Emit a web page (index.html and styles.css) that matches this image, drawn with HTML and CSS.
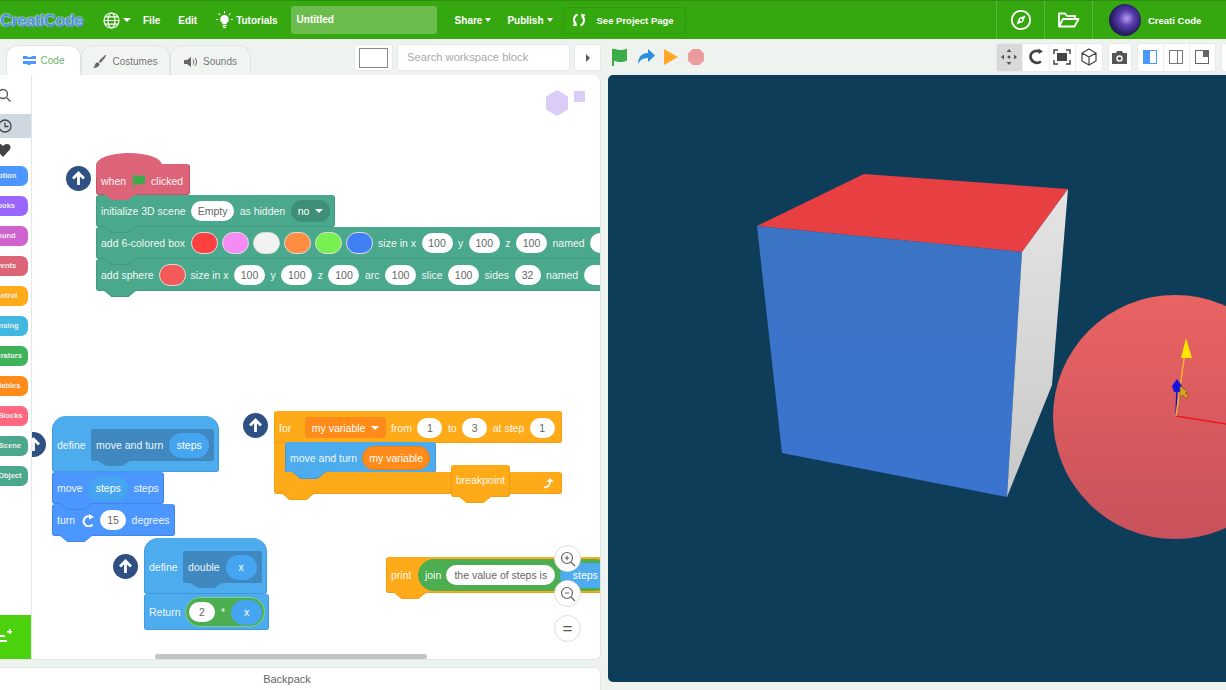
FILE: index.html
```html
<!DOCTYPE html>
<html lang="en">

<head>
    <meta charset="UTF-8">
    <title>CreatiCode</title>
    <link rel="stylesheet" href="styles.css">
</head>

<body>
    <header class="topbar">
        <div class="logo">CreatiCode</div>
        <svg class="globe" width="17" height="17" viewBox="0 0 17 17" fill="none" stroke="#fff" stroke-width="1.2">
            <circle cx="8.5" cy="8.5" r="7.5" />
            <ellipse cx="8.5" cy="8.5" rx="3.4" ry="7.5" />
            <path d="M1 8.5h15M2 4.8h13M2 12.2h13" />
        </svg>
        <span class="caret caret-globe"></span>
        <span class="menu-item menu-file">File</span>
        <span class="menu-item menu-edit">Edit</span>
        <svg class="bulb" width="17" height="18" viewBox="0 0 17 18" fill="#fff">
            <path d="M8.5 4a4.3 4.3 0 0 0-2.6 7.7c.5.4.7 1 .7 1.6h3.8c0-.6.2-1.2.7-1.6A4.3 4.3 0 0 0 8.5 4z" />
            <rect x="6.6" y="14" width="3.8" height="1.4" />
            <rect x="7.2" y="16" width="2.6" height="1.2" />
            <path d="M8 0h1v2.4H8zM0 8h2.2v1H0zM14.8 8H17v1h-2.2zM2.2 2.8l.7-.7 1.6 1.6-.7.7zM14.1 2.1l.7.7-1.6 1.6-.7-.7z" />
        </svg>
        <span class="menu-item menu-tutorials">Tutorials</span>
        <div class="title-box">Untitled</div>
        <span class="menu-item menu-share">Share</span>
        <span class="caret caret-small"></span>
        <span class="menu-item menu-publish">Publish</span>
        <span class="caret caret-small"></span>
        <div class="project-btn">
            <svg width="14" height="14" viewBox="0 0 14 14" fill="none" stroke="#fff" stroke-width="2">
                <path d="M5.5 1.5C3 2.5 2 4.5 2 7s.8 3.7 2 5M8.5 12.5C11 11.5 12 9.5 12 7s-.8-3.7-2-5" />
                <path d="M3.5 8.5 4 12.5l-3-.5M10.5 5.5 10 1.5l3 .5" stroke-width="1.3" />
            </svg>
            <span>See Project Page</span>
        </div>
        <div class="topbar-right">
            <div class="top-icon">
                <svg width="22" height="22" viewBox="0 0 22 22" fill="none" stroke="#fff" stroke-width="1.8">
                    <circle cx="11" cy="11" r="9.2" />
                    <path d="M15.5 6.5 13 13l-6.5 2.5L9 9z" fill="#fff" stroke="none" />
                    <circle cx="11" cy="11" r="1.3" fill="#36a80f" stroke="none" />
                </svg>
            </div>
            <div class="top-icon">
                <svg width="23" height="18" viewBox="0 0 23 18" fill="none" stroke="#fff" stroke-width="1.8" stroke-linejoin="round">
                    <path d="M2 15.5V2.5h6l2 2.5h8v3" />
                    <path d="M2 15.5h15.5L21.5 8H6z" />
                </svg>
            </div>
            <div class="user">
                <div class="avatar"></div>
                <span>Creati Code</span>
            </div>
        </div>
    </header>

    <div class="subbar">
        <div class="subbar-left">
            <div class="tabs">
                <div class="tab tab-active">
                    <svg width="13" height="11" viewBox="0 0 13 11" fill="#4c97ff">
                        <path d="M0 1h4l1 1h3l1-1h4v3H0zM0 6h13v3H8l-1 1H5L4 9H0z" />
                    </svg>
                    <span>Code</span>
                </div>
                <div class="tab">
                    <svg width="14" height="14" viewBox="0 0 14 14" fill="#666">
                        <path d="M13 0c.6.6-3 5.5-5.5 8L5.8 6.3C8 3.8 12.4-.6 13 0zM5 7.2l1.7 1.7C6.5 11.5 3 13 0 12.800c1.5-.8 1.6-2 2-3.200.4-1.200 1.600-2.400 3-2.400z" />
                    </svg>
                    <span>Costumes</span>
                </div>
                <div class="tab">
                    <svg width="14" height="12" viewBox="0 0 14 12" fill="#666">
                        <path d="M0 4h3l4-3v10L3 8H0z" />
                        <path d="M9 3.5c1.2 1.5 1.2 3.5 0 5M11 2c2 2.3 2 5.7 0 8" fill="none" stroke="#666" />
                    </svg>
                    <span>Sounds</span>
                </div>
            </div>
            <div class="tool-box color-box"><div class="color-inner"></div></div>
            <div class="tool-box search-box">Search workspace block</div>
            <div class="tool-box arrow-box"><span class="arrow-right"></span></div>
        </div>
        <div class="subbar-right">
            <div class="run-icons">
                <svg width="18" height="18" viewBox="0 0 18 18" fill="#3cab4a">
                    <path d="M1 1c3-1 5 1 8 1 2 0 5-.5 7-1.5v12c-2 1-5 1.500-7 1.500-3 0-5-1.500-6-1v5.500H1z" />
                </svg>
                <svg width="18" height="16" viewBox="0 0 18 16" fill="#2b8fe0">
                    <path d="M11 0l7 6.5-7 6.5V9C6 9 3 11 1 15 1 9 4 4 11 4z" />
                </svg>
                <svg width="16" height="18" viewBox="0 0 16 18" fill="#ffa726">
                    <path d="M1 1v16l14-8z" />
                </svg>
                <svg width="18" height="18" viewBox="0 0 18 18" fill="#eb9c9c">
                    <path d="M5.5 1h7L17 5.5v7L12.5 17h-7L1 12.5v-7z" />
                </svg>
            </div>
            <div class="stage-tools">
                <div class="tool-group">
                    <div class="tool tool-on">
                        <svg width="16" height="16" viewBox="0 0 16 16" fill="#555">
                            <path d="M8 0l2.5 3h-5zM8 16l-2.5-3h5zM0 8l3-2.5v5zM16 8l-3 2.5v-5z" />
                            <circle cx="8" cy="8" r="1.5" />
                        </svg>
                    </div>
                    <div class="tool">
                        <svg width="16" height="18" viewBox="0 0 16 18" fill="none" stroke="#444" stroke-width="2.6">
                            <path d="M13 13.5C9 16.5 3 14 2.5 9 2 4.5 7 1.5 12 3.500" />
                            <path d="M10.5 .5l4.5 3-4.5 2.5z" fill="#444" stroke="none" />
                        </svg>
                    </div>
                    <div class="tool">
                        <svg width="18" height="16" viewBox="0 0 18 16" fill="none" stroke="#444" stroke-width="1.5">
                            <path d="M1 5V1h4M13 1h4v4M17 11v4h-4M5 15H1v-4" />
                            <rect x="4" y="4" width="10" height="8" fill="#444" stroke="none" />
                        </svg>
                    </div>
                    <div class="tool">
                        <svg width="16" height="18" viewBox="0 0 16 18" fill="none" stroke="#444" stroke-width="1.2">
                            <path d="M8 1l7 4v8l-7 4-7-4V5zM1 5l7 4 7-4M8 9v8" />
                        </svg>
                    </div>
                </div>
                <div class="tool-group">
                    <div class="tool tool-narrow">
                        <svg width="17" height="15" viewBox="0 0 17 15" fill="#555">
                            <path d="M1 3h4l1-2h5l1 2h4v11H1z" />
                            <circle cx="8.5" cy="8.5" r="3.2" fill="#fff" />
                            <circle cx="8.5" cy="8.5" r="1.8" />
                        </svg>
                    </div>
                </div>
                <div class="tool-group">
                    <div class="tool tool-panel">
                        <svg width="14" height="14" viewBox="0 0 14 14">
                            <rect x=".5" y=".5" width="13" height="13" fill="#fff" stroke="#4c97ff" />
                            <rect x="1" y="1" width="6" height="12" fill="#4c97ff" />
                        </svg>
                    </div>
                    <div class="tool tool-panel">
                        <svg width="14" height="14" viewBox="0 0 14 14">
                            <rect x=".5" y=".5" width="13" height="13" fill="#fff" stroke="#777" />
                            <rect x="8" y="1" width="1" height="12" fill="#777" />
                        </svg>
                    </div>
                    <div class="tool tool-panel">
                        <svg width="14" height="14" viewBox="0 0 14 14">
                            <rect x=".5" y=".5" width="13" height="13" fill="#fff" stroke="#666" />
                            <rect x="8" y="1" width="5" height="6" fill="#666" />
                        </svg>
                    </div>
                </div>
                <div class="tool-group"><div class="tool"></div></div>
            </div>
        </div>
    </div>

    <main class="main">
        <section class="editor">
            <div class="workspace">
                <nav class="palette">
                    <div class="palette-icon">
                        <svg width="14" height="14" viewBox="0 0 14 14" fill="none" stroke="#555" stroke-width="1.3">
                            <circle cx="3" cy="6" r="4.5" />
                            <path d="M6.5 9.5 10.5 13.5" />
                        </svg>
                    </div>
                    <div class="palette-icon palette-recent">
                        <svg width="14" height="14" viewBox="0 0 14 14" fill="none" stroke="#444" stroke-width="1.3">
                            <circle cx="5" cy="7" r="6" />
                            <path d="M5 3.5V7.5h3.5" />
                        </svg>
                    </div>
                    <div class="palette-icon palette-heart">
                        <svg width="16" height="14" viewBox="0 0 16 14" fill="#444">
                            <path d="M8 14 1.5 7C-.5 4.8.5 1 4 1c2 0 3.3 1 4 2.2C8.7 2 10 1 12 1c3.5 0 4.5 3.8 2.5 6z" />
                        </svg>
                    </div>
                    <div class="cat cat-motion">Motion</div>
                    <div class="cat cat-looks">Looks</div>
                    <div class="cat cat-sound">Sound</div>
                    <div class="cat cat-events">Events</div>
                    <div class="cat cat-control">Control</div>
                    <div class="cat cat-sensing">Sensing</div>
                    <div class="cat cat-operators">Operators</div>
                    <div class="cat cat-variables">Variables</div>
                    <div class="cat cat-myblocks">My Blocks</div>
                    <div class="cat cat-scene">3D Scene</div>
                    <div class="cat cat-object">3D Object</div>
                    <div class="add-ext">
                        <svg width="16" height="16" viewBox="0 0 16 16" fill="#fff">
                            <path d="M0 6h9v2H0zM0 11h11v2H0zM11 2h2V0h1.5v2H16v1.5h-1.5V5H13V3.5h-2z" />
                        </svg>
                    </div>
                </nav>

                <div class="canvas">
                    <div class="hint-shapes">
                        <svg width="42" height="28" viewBox="0 0 42 28" fill="#dccdf8">
                            <path d="M11 0l11 6.5v13L11 26 0 19.5v-13z" />
                            <rect x="28" y="1" width="11" height="11" />
                        </svg>
                    </div>

                    <div class="up-btn up-1"><svg width="15" height="15" viewBox="0 0 15 15" fill="none" stroke="#fff" stroke-width="2.8"><path d="M7.5 14V2M2 7.5 7.5 2 13 7.5" /></svg></div>
                    <div class="stack stack-scene">
                        <div class="row hat red notch">
                            <span>when</span>
                            <svg width="14" height="14" viewBox="0 0 14 14" fill="#3cab4a"><path d="M1 1c2.5-1 4 1 6 1s4-1 6-1v8.5c-2 1-4 1-6 1s-3.5-1-4.5-.6V14H1z" /></svg>
                            <span>clicked</span>
                        </div>
                        <div class="row green fit notch">
                            <span>initialize 3D scene</span>
                            <b class="input">Empty</b>
                            <span>as hidden</span>
                            <b class="drop drop-green">no <i class="caret"></i></b>
                        </div>
                        <div class="row green notch">
                            <span>add 6-colored box</span>
                            <b class="swatch sw-red"></b>
                            <b class="swatch sw-pink"></b>
                            <b class="swatch sw-white"></b>
                            <b class="swatch sw-orange"></b>
                            <b class="swatch sw-lime"></b>
                            <b class="swatch sw-blue"></b>
                            <span>size in x</span>
                            <b class="input num">100</b>
                            <span>y</span>
                            <b class="input num">100</b>
                            <span>z</span>
                            <b class="input num">100</b>
                            <span>named</span>
                            <b class="input wide"></b>
                        </div>
                        <div class="row green notch">
                            <span>add sphere</span>
                            <b class="swatch sw-coral"></b>
                            <span>size in x</span>
                            <b class="input num">100</b>
                            <span>y</span>
                            <b class="input num">100</b>
                            <span>z</span>
                            <b class="input num">100</b>
                            <span>arc</span>
                            <b class="input num">100</b>
                            <span>slice</span>
                            <b class="input num">100</b>
                            <span>sides</span>
                            <b class="input short">32</b>
                            <span>named</span>
                            <b class="input wide"></b>
                        </div>
                    </div>

                    <div class="up-btn up-2"><svg width="15" height="15" viewBox="0 0 15 15" fill="none" stroke="#fff" stroke-width="2.8"><path d="M7.5 14V2M2 7.5 7.5 2 13 7.5" /></svg></div>
                    <div class="stack stack-move">
                        <div class="row sky define">
                            <span>define</span>
                            <div class="proto">
                                <span>move and turn</span>
                                <b class="pill pill-steps">steps</b>
                            </div>
                        </div>
                        <div class="row blue fit notch">
                            <span>move</span>
                            <b class="pill pill-steps">steps</b>
                            <span>steps</span>
                        </div>
                        <div class="row blue fit notch">
                            <span>turn</span>
                            <svg width="14" height="13" viewBox="0 0 14 13" fill="none" stroke="#fff" stroke-width="2">
                                <path d="M11.5 10.5A5 5 0 1 1 9 2.5" />
                                <path d="M8 0l5 3-5 2.5z" fill="#fff" stroke="none" />
                            </svg>
                            <b class="input short">15</b>
                            <span>degrees</span>
                        </div>
                    </div>

                    <div class="up-btn up-3"><svg width="15" height="15" viewBox="0 0 15 15" fill="none" stroke="#fff" stroke-width="2.8"><path d="M7.5 14V2M2 7.5 7.5 2 13 7.5" /></svg></div>
                    <div class="stack stack-double">
                        <div class="row sky define define-small">
                            <span>define</span>
                            <div class="proto">
                                <span>double</span>
                                <b class="pill pill-x">x</b>
                            </div>
                        </div>
                        <div class="row sky fit return">
                            <span>Return</span>
                            <div class="op-pill">
                                <b class="input short">2</b>
                                <span>*</span>
                                <b class="pill pill-x">x</b>
                            </div>
                        </div>
                    </div>

                    <div class="up-btn up-4"><svg width="15" height="15" viewBox="0 0 15 15" fill="none" stroke="#fff" stroke-width="2.8"><path d="M7.5 14V2M2 7.5 7.5 2 13 7.5" /></svg></div>
                    <div class="stack stack-for">
                        <div class="row amber for-head">
                            <span>for</span>
                            <b class="drop drop-amber">my variable <i class="caret"></i></b>
                            <span>from</span>
                            <b class="input one">1</b>
                            <span>to</span>
                            <b class="input one">3</b>
                            <span>at step</span>
                            <b class="input one">1</b>
                        </div>
                        <div class="for-mid">
                            <div class="row sky fit notch for-call">
                                <span>move and turn</span>
                                <b class="pill pill-var">my variable</b>
                            </div>
                        </div>
                        <div class="row amber for-foot notch">
                            <svg class="loop-arrow" width="12" height="12" viewBox="0 0 12 12" fill="none" stroke="#fff" stroke-width="1.6">
                                <path d="M1 10.5c4 0 6-2 6-6" />
                                <path d="M3.8 5 7 1l3.5 4z" fill="#fff" stroke="none" />
                            </svg>
                        </div>
                        <div class="row amber breakpoint notch">
                            <span>breakpoint</span>
                        </div>
                    </div>

                    <div class="stack stack-print">
                        <div class="row amber print notch">
                            <span>print</span>
                            <div class="join-pill">
                                <span>join</span>
                                <b class="input text-input">the value of steps is</b>
                                <b class="pill pill-join">steps</b>
                            </div>
                        </div>
                    </div>

                    <div class="zoom-btns">
                        <div class="zoom-btn">
                            <svg width="16" height="16" viewBox="0 0 16 16" fill="none" stroke="#666" stroke-width="1.2">
                                <circle cx="7" cy="7" r="5.5" />
                                <path d="M11 11l4 4M4.8 7h4.4M7 4.8v4.4" />
                            </svg>
                        </div>
                        <div class="zoom-btn">
                            <svg width="16" height="16" viewBox="0 0 16 16" fill="none" stroke="#666" stroke-width="1.2">
                                <circle cx="7" cy="7" r="5.5" />
                                <path d="M11 11l4 4M4.8 7h4.4" />
                            </svg>
                        </div>
                        <div class="zoom-btn zoom-reset">=</div>
                    </div>

                    <div class="scrollbar"></div>
                </div>
            </div>
            <div class="backpack">Backpack</div>
        </section>

        <section class="stage">
            <svg class="scene" width="618" height="607" viewBox="608 75 618 607">
                <defs>
                    <linearGradient id="sphereFill" x1="0" y1="0" x2="0" y2="1">
                        <stop offset="0" stop-color="#e96362" />
                        <stop offset="1" stop-color="#c8525c" />
                    </linearGradient>
                    <linearGradient id="blueFace" x1="0" y1="0" x2="0" y2="1">
                        <stop offset="0" stop-color="#3b74c4" />
                        <stop offset="1" stop-color="#3a74d0" />
                    </linearGradient>
                    <linearGradient id="greyFace" x1="0" y1="0" x2="0" y2="1">
                        <stop offset="0" stop-color="#e4e4e4" />
                        <stop offset="1" stop-color="#c8c8c8" />
                    </linearGradient>
                </defs>
                <polygon points="757,226 864,174 1068,189 1022,252" fill="#e83f42" />
                <polygon points="757,226 1022,252 1007,497 782,453" fill="url(#blueFace)" />
                <polygon points="1068,189 1022,252 1007,497 1052,385" fill="url(#greyFace)" />
                <circle cx="1175" cy="417" r="122" fill="url(#sphereFill)" />
                <path d="M1176 416 1226 424" stroke="#f01818" stroke-width="1.5" />
                <path d="M1176 416 1177 388" stroke="#1010d0" stroke-width="1.5" />
                <path d="M1176 416 1185 352" stroke="#f5b030" stroke-width="1.5" />
                <path d="M1186 338 1192 358 1181 358z" fill="#ffe600" />
                <path d="M1177 379 1182 386 1180 392 1174 392 1172 386z" fill="#1414e0" />
                <path d="M1180 386 1180 398 1183 395 1187 399 1188 396 1185 393 1188 392z" fill="#d9a326" stroke="#6b5312" stroke-width=".6" />
            </svg>
        </section>
    </main>
</body>

</html>
```

FILE: styles.css
```css
body {
    margin: 0;
    width: 1226px;
    height: 690px;
    overflow: hidden;
    font-family: "Liberation Sans", Arial, sans-serif;
    background-color: #eef3ef;
}

svg {
    display: block;
    flex-shrink: 0;
}

/* Top bar */
.topbar {
    display: flex;
    align-items: center;
    height: 39px;
    background-color: #36a80f;
    border-top: 1px solid #2f8f10;
    box-sizing: border-box;
    color: #fff;
    font-size: 10px;
    font-weight: bold;
}

.logo {
    width: 87px;
    flex-shrink: 0;
    font-size: 16.5px;
    letter-spacing: -0.5px;
    color: #4d94d8;
    text-shadow: 0 0 1px #fff, 0 0 2px #d8f0ff, 1px 1px 0 #1f5f9a;
    white-space: nowrap;
}

.globe {
    margin-left: 16px;
}

.caret {
    display: inline-block;
    width: 0;
    height: 0;
    border-left: 4px solid transparent;
    border-right: 4px solid transparent;
    border-top: 4px solid currentColor;
    vertical-align: middle;
}

.caret-globe {
    margin-left: 3px;
}

.caret-small {
    margin-left: 3px;
    border-left-width: 3px;
    border-right-width: 3px;
}

.menu-file {
    margin-left: 12px;
}

.menu-edit {
    margin-left: 18px;
}

.bulb {
    margin-left: 19px;
}

.menu-tutorials {
    margin-left: 3px;
}

.title-box {
    width: 146px;
    height: 28px;
    line-height: 28px;
    margin-left: 13px;
    padding-left: 6px;
    box-sizing: border-box;
    background-color: #6dbd4e;
    border-radius: 3px;
}

.menu-share {
    margin-left: 18px;
}

.menu-publish {
    margin-left: 16px;
}

.project-btn {
    display: flex;
    align-items: center;
    gap: 11px;
    width: 123px;
    height: 27px;
    margin-left: 10px;
    padding-left: 8px;
    box-sizing: border-box;
    border: 1px solid #32980f;
    border-radius: 4px;
    font-size: 9.5px;
}

.topbar-right {
    display: flex;
    align-items: center;
    height: 100%;
    margin-left: auto;
}

.top-icon {
    display: flex;
    align-items: center;
    justify-content: center;
    width: 47px;
    height: 100%;
    border-left: 1px solid #58b83b;
}

.user {
    display: flex;
    align-items: center;
    gap: 7px;
    width: 134px;
    height: 100%;
    padding-left: 16px;
    box-sizing: border-box;
    border-left: 1px solid #58b83b;
    font-size: 9.5px;
}

.avatar {
    width: 32px;
    height: 32px;
    border-radius: 50%;
    background: radial-gradient(circle at 55% 45%, #b9a0f0 0%, #5a3fb0 30%, #2a2068 60%, #120f30 100%);
}

/* Second bar */
.subbar {
    display: flex;
    height: 36px;
}

.subbar-left {
    display: flex;
    align-items: flex-end;
    width: 601px;
    flex-shrink: 0;
}

.tabs {
    display: flex;
    margin-left: 6px;
    height: 30px;
}

.tab {
    display: flex;
    align-items: center;
    justify-content: center;
    gap: 5px;
    width: 81px;
    padding-top: 2px;
    box-sizing: border-box;
    background-color: #f1f5f2;
    border: 1px solid #dfe5e0;
    border-bottom: none;
    border-radius: 12px 12px 0 0;
    font-size: 10px;
    color: #777;
}

.tab:nth-child(2) {
    width: 89px;
}

.tab-active {
    width: 75px;
    padding-top: 0;
    background-color: #fff;
    color: #6fb06a;
}

.tool-box {
    height: 27px;
    margin-bottom: 4px;
    box-sizing: border-box;
    background-color: #fff;
    border: 1px solid #e6eae6;
    border-radius: 3px;
}

.color-box {
    display: flex;
    align-items: center;
    justify-content: center;
    width: 39px;
    margin-left: 103px;
}

.color-inner {
    width: 27px;
    height: 18px;
    border: 1px solid #888;
}

.search-box {
    width: 173px;
    margin-left: 4px;
    padding-left: 9px;
    line-height: 25px;
    font-size: 11.2px;
    color: #aaa;
}

.arrow-box {
    display: flex;
    align-items: center;
    justify-content: center;
    width: 27px;
    margin-left: 4px;
}

.arrow-right {
    border-top: 4px solid transparent;
    border-bottom: 4px solid transparent;
    border-left: 4px solid #555;
}

.subbar-right {
    display: flex;
    align-items: center;
    flex: 1;
    justify-content: space-between;
}

.run-icons {
    display: flex;
    align-items: center;
    gap: 8px;
    margin-left: 10px;
}

.stage-tools {
    display: flex;
    gap: 5px;
    margin-right: -22px;
}

.tool-group {
    display: flex;
    height: 27px;
    background-color: #fff;
    border: 1px solid #e6eae6;
    border-radius: 3px;
}

.tool {
    display: flex;
    align-items: center;
    justify-content: center;
    width: 25.5px;
    border-right: 1px solid #eef0ee;
}

.tool:last-child {
    border-right: none;
}

.tool-narrow {
    width: 22px;
}

.tool-panel {
    width: 25px;
}

.tool-on {
    background-color: #d9d9d9;
}

/* Main area */
.main {
    display: flex;
    height: 615px;
}

.editor {
    display: flex;
    flex-direction: column;
    width: 601px;
    flex-shrink: 0;
}

.workspace {
    display: flex;
    height: 585px;
    background-color: #fff;
    border-bottom: 1px solid #dfe5e0;
    border-right: 1px solid #dfe5e0;
    border-radius: 0 6px 6px 0;
    box-sizing: border-box;
    overflow: hidden;
}

.palette {
    position: relative;
    z-index: 5;
    display: flex;
    flex-direction: column;
    gap: 10px;
    width: 31px;
    flex-shrink: 0;
    overflow: hidden;
    background-color: #fff;
    box-shadow: 1px 0 0 #e4e8e4;
}

.palette-icon {
    display: flex;
    align-items: center;
    height: 24px;
    margin-bottom: -10px;
}

.palette-icon:first-child {
    margin-top: 8px;
    margin-bottom: -3px;
}

.palette-recent {
    background-color: #cfd8e0;
}

.palette-heart {
    margin-bottom: -6px;
    margin-left: -5px;
}

.cat {
    flex-shrink: 0;
    width: 48px;
    height: 20px;
    margin-left: -20px;
    box-sizing: border-box;
    border-radius: 7px;
    text-align: center;
    line-height: 19px;
    font-size: 7.5px;
    font-weight: bold;
    color: #eee;
    white-space: nowrap;
}

.cat-motion { background-color: #4c97ff; }
.cat-looks { background-color: #9966ff; }
.cat-sound { background-color: #cf63cf; }
.cat-events { background-color: #dd6478; }
.cat-control { background-color: #ffab19; }
.cat-sensing { background-color: #40b8e0; }
.cat-operators { background-color: #40b35a; }
.cat-variables { background-color: #ff8c1a; }
.cat-myblocks { background-color: #ff6680; }
.cat-scene { background-color: #4aa88c; }
.cat-object { background-color: #4aa88c; }

.add-ext {
    display: flex;
    align-items: center;
    flex-shrink: 0;
    height: 44px;
    margin-top: auto;
    background-color: #4cd10d;
}

.add-ext svg {
    margin-left: -4px;
}

.canvas {
    position: relative;
    flex: 1;
    overflow: hidden;
}

.hint-shapes {
    position: absolute;
    left: 515px;
    top: 15px;
}

/* Blocks on the canvas */
.stack {
    position: absolute;
    display: flex;
    flex-direction: column;
    align-items: flex-start;
    color: #fff;
    font-size: 10.5px;
}

.stack-scene {
    left: 65px;
    top: 77px;
}

.stack-move {
    left: 21px;
    top: 341px;
}

.stack-double {
    left: 113px;
    top: 463px;
}

.stack-for {
    left: 243px;
    top: 336px;
    width: 288px;
}

.stack-print {
    left: 355px;
    top: 482px;
}

.row {
    position: relative;
    display: flex;
    align-items: center;
    flex-shrink: 0;
    gap: 5.5px;
    height: 32px;
    padding: 0 4px;
    box-sizing: border-box;
    background-color: var(--c);
    border: 1px solid var(--d);
    border-top-color: var(--c);
    border-radius: 3px;
    white-space: nowrap;
}

.row span {
    opacity: 0.92;
}

/* the tab under a block, with a darker edge drawn one pixel lower */
.notch::before {
    content: "";
    position: absolute;
    z-index: 1;
    left: 6px;
    top: 100%;
    width: 34px;
    height: 7px;
    background-color: var(--d);
    clip-path: polygon(0 0, 100% 0, 75% 100%, 25% 100%);
}

.notch::after {
    content: "";
    position: absolute;
    z-index: 1;
    left: 7px;
    top: 100%;
    width: 32px;
    height: 6px;
    background-color: var(--c);
    clip-path: polygon(0 0, 100% 0, 75% 100%, 25% 100%);
}

.red { --c: #dd6478; --d: #c45468; }
.green { --c: #4aa88c; --d: #43997f; }
.sky { --c: #4cacee; --d: #4398e0; }
.blue { --c: #4c97ff; --d: #3f85e6; }
.amber { --c: #ffab19; --d: #f09e12; }

.hat {
    width: 94px;
    margin-top: 12px;
    height: 31px;
    padding-top: 2px;
    border-radius: 0 3px 3px 3px;
}

.hat::before {
    left: -1px;
    top: -12px;
    z-index: 0;
    width: 66px;
    height: 24px;
    background-color: var(--c);
    border-radius: 50% 50% 0 0;
    clip-path: none;
}

.hat span, .hat svg {
    position: relative;
}

.input {
    display: flex;
    align-items: center;
    justify-content: center;
    flex-shrink: 0;
    width: 43px;
    height: 20px;
    background-color: #fff;
    border-radius: 10px;
    color: #666;
    font-weight: normal;
}

.num {
    width: 31px;
}

.short {
    width: 26px;
}

.one {
    width: 25px;
}

.wide {
    width: 40px;
}

.swatch {
    flex-shrink: 0;
    width: 27px;
    height: 22px;
    margin-right: -1.5px;
    border-radius: 11px;
    border: 1px solid #ddd;
    box-sizing: border-box;
}

.sw-red { background-color: #ff4040; }
.sw-pink { background-color: #f58cf5; }
.sw-white { background-color: #f2f2f2; }
.sw-orange { background-color: #ff8c40; }
.sw-lime { background-color: #77f050; }
.sw-blue { background-color: #3f80f5; margin-right: 0; }
.sw-coral { background-color: #f55a5a; margin-right: -1px; }

.drop {
    display: flex;
    align-items: center;
    gap: 6px;
    font-weight: normal;
}

.drop-green {
    height: 22px;
    padding: 0 7px;
    background-color: #3f8f78;
    border-radius: 11px;
}

.drop-amber {
    height: 21px;
    padding: 0 7px;
    margin: 0 -1px 0 8px;
    background-color: #ff8c1a;
    border-radius: 3px;
}

.pill {
    display: flex;
    align-items: center;
    justify-content: center;
    flex-shrink: 0;
    height: 25px;
    border-radius: 13px;
    background-color: #45a5f0;
    font-weight: normal;
}

.pill-steps {
    width: 40px;
}

.pill-x {
    width: 31px;
}

.pill-var {
    width: 68px;
    height: 24px;
    background-color: #ff8c1a;
    border: 1px solid #f07f10;
    box-sizing: border-box;
}

.define {
    width: 167px;
    height: 56px;
    padding-top: 2px;
    border-radius: 14px 14px 3px 3px;
    background-color: var(--c);
}

.define-small {
    width: 123px;
    height: 56px;
}

.proto {
    position: relative;
    display: flex;
    align-items: center;
    gap: 6px;
    flex: 1;
    height: 32px;
    padding: 0 5px;
    background-color: #4088c0;
    border-radius: 2px;
}

.proto::after {
    content: "";
    position: absolute;
    left: 7px;
    top: 100%;
    width: 32px;
    height: 5px;
    background-color: #4088c0;
    clip-path: polygon(0 0, 100% 0, 75% 100%, 25% 100%);
}

.return {
    width: 125px;
    height: 36px;
}

.op-pill {
    display: flex;
    align-items: center;
    gap: 6px;
    height: 28px;
    padding: 0 2px 0 3px;
    margin-left: -1px;
    background-color: #4cae50;
    border: 1px solid #7fd08a;
    border-radius: 15px;
}

.for-head {
    width: 288px;
    height: 32px;
    border-radius: 3px 3px 3px 0;
    padding-top: 1px;
}

.for-mid {
    width: 100%;
    height: 31px;
    margin-top: -1px;
    border-left: 11px solid #ffab19;
    box-sizing: border-box;
}

.for-call {
    width: 151px;
    height: 31px;
    background-color: var(--c);
    gap: 5px;
}

.for-foot {
    justify-content: flex-end;
    width: 288px;
    height: 22px;
    padding-right: 6px;
    margin-top: -1px;
    border-radius: 0 3px 3px 3px;
}

.breakpoint {
    position: absolute;
    left: 177px;
    top: 54px;
    height: 32px;
    padding-bottom: 3px;
}

.print {
    height: 36px;
    padding-right: 0;
    width: 240px;
    border-right: none;
}

.join-pill {
    display: flex;
    align-items: center;
    gap: 5px;
    height: 32px;
    padding: 0 0 0 7px;
    background-color: #4cae50;
    border-radius: 16px;
    margin-left: 1px;
}

.text-input {
    width: 109px;
}

.pill-join {
    width: 50px;
    margin-left: -1px;
    background-color: #4cacee;
    border: 1px solid #4cae50;
}

.up-btn {
    position: absolute;
    display: flex;
    align-items: center;
    justify-content: center;
    width: 25px;
    height: 25px;
    background-color: #2e5082;
    border-radius: 50%;
}

.up-1 { left: 35px; top: 91px; }
.up-2 { left: -10px; top: 357px; }
.up-3 { left: 82px; top: 479px; }
.up-4 { left: 212px; top: 338px; }

.zoom-btns {
    position: absolute;
    z-index: 2;
    left: 523px;
    top: 470px;
    display: flex;
    flex-direction: column;
    gap: 8px;
}

.zoom-btn {
    display: flex;
    align-items: center;
    justify-content: center;
    width: 27px;
    height: 27px;
    box-sizing: border-box;
    background-color: #fff;
    border: 1px solid #ddd;
    border-radius: 50%;
    color: #555;
    font-size: 17px;
}

.scrollbar {
    position: absolute;
    left: 124px;
    top: 579px;
    width: 272px;
    height: 5px;
    background-color: #c4c4c4;
    border-radius: 3px;
}

.backpack {
    height: 23px;
    margin-top: 7px;
    background-color: #fff;
    border: 1px solid #e3e8e3;
    border-bottom: none;
    border-left: none;
    border-radius: 0 6px 0 0;
    box-sizing: border-box;
    text-align: center;
    line-height: 22px;
    font-size: 11px;
    color: #666;
    padding-right: 26px;
}

/* 3D stage */
.stage {
    width: 618px;
    height: 607px;
    margin-left: 7px;
    background-color: #0e3d5a;
    border-radius: 5px 0 0 5px;
    overflow: hidden;
}
```
